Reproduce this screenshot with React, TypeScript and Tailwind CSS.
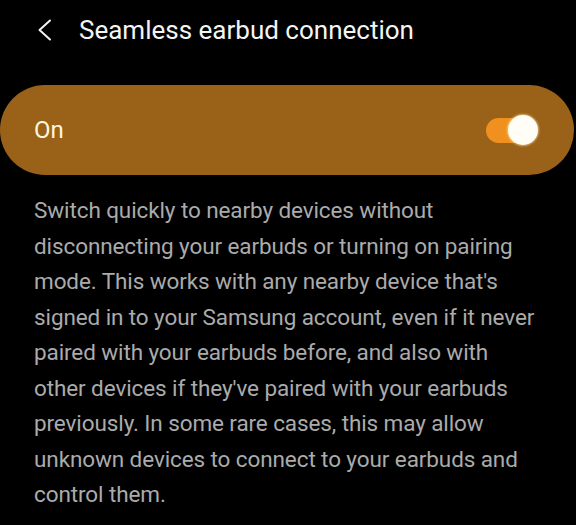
export default function App() {
  return (
    <div className="w-[576px] h-[525px] bg-black overflow-hidden font-['Roboto',sans-serif]">
      {/* Header */}
      <div className="flex items-center h-[60px]">
        <button className="ml-[37px] flex items-center text-[#f2f2f2]" aria-label="Back">
          <svg width="15" height="22" viewBox="0 0 15 22" fill="none">
            <polyline points="13,1.5 2.5,11 13,20.5" stroke="currentColor" strokeWidth="2" strokeLinecap="round" strokeLinejoin="round" />
          </svg>
        </button>
        <h1 className="ml-[27px] text-[26px] text-[#f4f4f4] leading-none">Seamless earbud connection</h1>
      </div>

      {/* Toggle card */}
      <div className="mt-[25px] mr-[2px] h-[90px] rounded-full bg-[#9a6219] flex items-center justify-between pl-[34px] pr-[36px]">
        <span className="text-[24px] text-[#fff6dc] leading-none">On</span>
        <div className="relative w-[52px] h-[30px] flex items-center">
          <div className="w-[44px] h-[25px] rounded-full bg-[#f0911f]" />
          <div className="absolute right-0 top-0 w-[30px] h-[30px] rounded-full bg-[#fffdf5] shadow-[0_0_2px_1px_rgba(255,230,170,0.6)]" />
        </div>
      </div>

      {/* Description */}
      <p className="mt-[18px] pl-[34px] pr-[36px] text-[22.5px] leading-[35.5px] tracking-[-0.1px] text-[#ababab]">
        Switch quickly to nearby devices without disconnecting your earbuds or turning on pairing mode. This works with any nearby device that's signed in to your Samsung account, even if it never paired with your earbuds before, and also with other devices if they've paired with your earbuds previously. In some rare cases, this may allow unknown devices to connect to your earbuds and control them.
      </p>
    </div>
  );
}
